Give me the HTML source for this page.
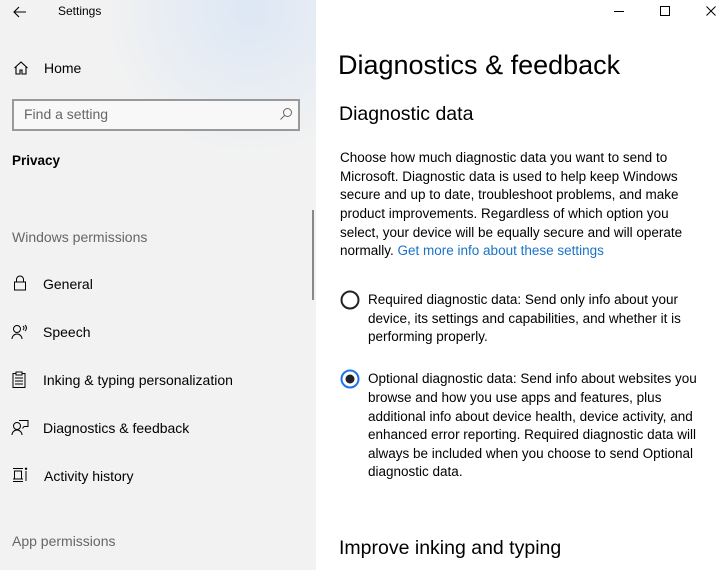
<!DOCTYPE html>
<html><head><meta charset="utf-8"><style>
*{margin:0;padding:0;box-sizing:border-box}
body{width:728px;height:570px;overflow:hidden;font-family:"Liberation Sans",sans-serif;color:#000;background:#fff;position:relative}
#side{position:absolute;left:0;top:0;width:316px;height:570px;background:#f2f2f2;overflow:hidden}
#glow{position:absolute;left:100px;top:-140px;width:300px;height:300px;border-radius:50%;background:radial-gradient(circle,rgba(218,230,245,0.9),rgba(242,242,242,0) 70%)}
.t{position:absolute;white-space:nowrap}
.nav{position:absolute;font-size:14px;white-space:nowrap}
.ico{position:absolute}
.p{position:absolute;left:340px;font-size:13.5px;white-space:nowrap;color:#000}
.r{position:absolute;left:368px;font-size:13.5px;white-space:nowrap}
</style></head><body>
<div id="side"><div id="glow"></div>
<svg class="ico" style="left:12px;top:4px" width="16" height="16" viewBox="0 0 16 16"><path d="M14 8H2M7 3L2 8l5 5" fill="none" stroke="#000" stroke-width="1.1"/></svg>
<div class="t" style="left:58px;top:4px;font-size:12px">Settings</div>
<svg class="ico" style="left:13px;top:60px" width="16" height="16" viewBox="0 0 16 16"><path d="M1.5 8L8 2l6.5 6M3 7v7h4v-4h2v4h4V7" fill="none" stroke="#000" stroke-width="1.1"/></svg>
<div class="nav" style="left:44px;top:60px">Home</div>
<div style="position:absolute;left:12px;top:99px;width:288px;height:32px;border:2px solid #999;background:#f8f8f8"></div>
<div class="t" style="left:24px;top:106px;font-size:14px;color:#666">Find a setting</div>
<svg class="ico" style="left:279px;top:107px" width="14" height="14" viewBox="0 0 14 14"><circle cx="8.5" cy="5.5" r="4" fill="none" stroke="#666"/><path d="M5.5 8.5L1.5 12.5" stroke="#666"/></svg>
<div class="nav" style="left:12px;top:153px;font-weight:bold;font-size:13.5px">Privacy</div>
<div class="nav" style="left:12px;top:229px;color:#666">Windows permissions</div>
<div style="position:absolute;left:312px;top:210px;width:2px;height:90px;background:#888"></div>
<svg class="ico" style="left:13px;top:275px" width="14" height="16" viewBox="0 0 14 16"><rect x="1.5" y="7" width="11" height="8" fill="none" stroke="#000"/><path d="M3.5 7V4.5a3.5 3.5 0 0 1 7 0V7" fill="none" stroke="#000"/></svg>
<div class="nav" style="left:43px;top:276px">General</div>
<svg class="ico" style="left:11px;top:324px" width="18" height="16" viewBox="0 0 18 16"><circle cx="6" cy="5" r="3.5" fill="none" stroke="#000"/><path d="M1 15a5 5 0 0 1 10 0M12 2q2 2 0 4M14 1q3 3 0 6" fill="none" stroke="#000"/></svg>
<div class="nav" style="left:43px;top:324px">Speech</div>
<svg class="ico" style="left:12px;top:371px" width="14" height="17" viewBox="0 0 14 17"><rect x="1" y="2.5" width="12" height="14" fill="none" stroke="#000"/><rect x="4" y="1" width="6" height="3" fill="#fff" stroke="#000"/><path d="M3 7h8M3 10h8M3 13h8" stroke="#000"/></svg>
<div class="nav" style="left:43px;top:372px">Inking &amp; typing personalization</div>
<svg class="ico" style="left:11px;top:419px" width="18" height="17" viewBox="0 0 18 17"><circle cx="6" cy="7" r="3.5" fill="none" stroke="#000"/><path d="M1 16a5 5 0 0 1 10 0M8 1.5h9v6h-4l-1.5 2" fill="none" stroke="#000"/></svg>
<div class="nav" style="left:43px;top:420px">Diagnostics &amp; feedback</div>
<svg class="ico" style="left:12px;top:467px" width="16" height="16" viewBox="0 0 16 16"><path d="M1 1.5h10M1 14.5h10M2.5 4v8h7V4zM1 12h10M14 4v10" fill="none" stroke="#000"/><circle cx="14" cy="1.8" r="1.2" fill="#000"/></svg>
<div class="nav" style="left:44px;top:468px">Activity history</div>
<div class="nav" style="left:12px;top:533px;color:#666">App permissions</div>
</div>
<svg class="ico" style="left:614px;top:4px" width="110" height="16" viewBox="0 0 110 16"><path d="M0 7.5h10" stroke="#000"/><rect x="46.5" y="2.5" width="9" height="9" fill="none" stroke="#000"/><path d="M92.5 2.5l9 9M101.5 2.5l-9 9" stroke="#000"/></svg>
<div class="t" style="left:338px;top:50px;font-size:27px">Diagnostics &amp; feedback</div>
<div class="t" style="left:339px;top:103px;font-size:19.5px">Diagnostic data</div>
<div class="p" style="top:150px">Choose how much diagnostic data you want to send to</div>
<div class="p" style="top:169px">Microsoft. Diagnostic data is used to help keep Windows</div>
<div class="p" style="top:187px">secure and up to date, troubleshoot problems, and make</div>
<div class="p" style="top:206px">product improvements. Regardless of which option you</div>
<div class="p" style="top:225px">select, your device will be equally secure and will operate</div>
<div class="p" style="top:243px">normally. <span style="color:#1a73c8">Get more info about these settings</span></div>
<svg class="ico" style="left:340px;top:290px" width="20" height="20"><circle cx="10" cy="10" r="8.5" fill="#fff" stroke="#222" stroke-width="2"/></svg>
<div class="r" style="top:292px">Required diagnostic data: Send only info about your</div>
<div class="r" style="top:311px">device, its settings and capabilities, and whether it is</div>
<div class="r" style="top:329px">performing properly.</div>
<svg class="ico" style="left:340px;top:369px" width="20" height="20"><circle cx="10" cy="10" r="8.5" fill="#fff" stroke="#1a73e8" stroke-width="2"/><circle cx="10" cy="10" r="4.5" fill="#222"/></svg>
<div class="r" style="top:371px">Optional diagnostic data: Send info about websites you</div>
<div class="r" style="top:390px">browse and how you use apps and features, plus</div>
<div class="r" style="top:409px">additional info about device health, device activity, and</div>
<div class="r" style="top:427px">enhanced error reporting. Required diagnostic data will</div>
<div class="r" style="top:446px">always be included when you choose to send Optional</div>
<div class="r" style="top:464px">diagnostic data.</div>
<div class="t" style="left:339px;top:537px;font-size:19.5px">Improve inking and typing</div>
</body></html>
